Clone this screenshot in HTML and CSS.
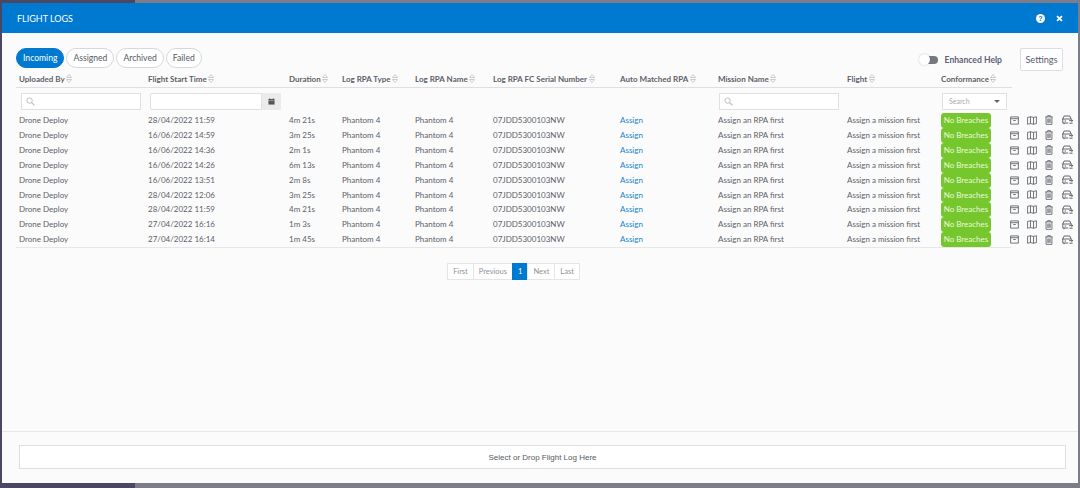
FILE: index.html
```html
<!DOCTYPE html>
<html lang="en">
<head>
<meta charset="utf-8">
<title>Flight Logs</title>
<link rel="stylesheet" href="styles.css">
</head>
<body>
<svg class="defs" width="0" height="0" aria-hidden="true">
  <symbol id="i-sort" viewBox="0 0 6 9"><path d="M3 .5 5.5 3.5H.5ZM3 8.5 .5 5.5h5Z" fill="none" stroke="#bcbfc3" stroke-width=".8"/></symbol>
  <symbol id="i-archive" viewBox="0 0 10 10"><path d="M.7 1h8.6v8H.7ZM.7 3h8.6M3.6 5h2.8" fill="none" stroke="#50565e" stroke-width=".9"/></symbol>
  <symbol id="i-map" viewBox="0 0 11 10"><path d="M.6 1.6 3.8.8l3.4.8 3.2-.8v7.6l-3.2.8-3.4-.8-3.2.8ZM3.8.8v7.6M7.2 1.6v7.6" fill="none" stroke="#50565e" stroke-width=".9"/></symbol>
  <symbol id="i-trash" viewBox="0 0 9 11"><path d="M.4 2h8.2M3 2V.6h3V2M1.2 2v8.4h6.6V2M3.2 3.8v5M4.5 3.8v5M5.8 3.8v5" fill="none" stroke="#50565e" stroke-width=".9"/></symbol>
  <symbol id="i-drone" viewBox="0 0 12 10"><path d="M.8 8V3.8L2.2 1h5.6L9 3.8M.4 4h9.2M.8 8h5.4M2 8v1.2M2.6 6h1.4" fill="none" stroke="#50565e" stroke-width=".9"/><path d="M7.2 5.6h3.4M9.4 4.4l1.4 1.2-1.4 1.2M10.6 8.2H7.4" fill="none" stroke="#50565e" stroke-width=".9"/></symbol>
  <symbol id="i-search" viewBox="0 0 10 10"><circle cx="4" cy="4" r="3" fill="none" stroke="#b5b9bd" stroke-width="1"/><path d="M6.2 6.2 9.4 9.4" stroke="#b5b9bd" stroke-width="1.2"/></symbol>
</svg>
<div class="modal">
  <header class="modal-head">
    <h1 class="modal-title">FLIGHT LOGS</h1>
    <div class="modal-actions">
      <svg class="head-icon" viewBox="0 0 10 10" width="9" height="9"><circle cx="5" cy="5" r="5" fill="#fff"/><text x="5" y="8" text-anchor="middle" class="help-mark">?</text></svg>
      <svg class="head-icon" viewBox="0 0 8 8" width="7" height="7"><path d="M1.2 1.2 6.8 6.8M6.8 1.2 1.2 6.8" stroke="#fff" stroke-width="2"/></svg>
    </div>
  </header>
  <main class="modal-body">
    <div class="toolbar">
      <nav class="tabs">
        <a class="tab tab-active">Incoming</a>
        <a class="tab">Assigned</a>
        <a class="tab">Archived</a>
        <a class="tab">Failed</a>
      </nav>
      <div class="toolbar-right">
        <span class="switch"><span class="switch-knob"></span></span>
        <span class="help-label">Enhanced Help</span>
        <button class="settings">Settings</button>
      </div>
    </div>
    <table class="logs">
      <colgroup>
        <col class="c1"><col class="c2"><col class="c3"><col class="c4"><col class="c5"><col class="c6"><col class="c7"><col class="c8"><col class="c9"><col class="c10"><col class="c11">
      </colgroup>
      <thead>
        <tr class="head-row">
          <th>Uploaded By<svg class="sort"><use href="#i-sort"/></svg></th>
          <th>Flight Start Time<svg class="sort"><use href="#i-sort"/></svg></th>
          <th>Duration<svg class="sort"><use href="#i-sort"/></svg></th>
          <th>Log RPA Type<svg class="sort"><use href="#i-sort"/></svg></th>
          <th>Log RPA Name<svg class="sort"><use href="#i-sort"/></svg></th>
          <th>Log RPA FC Serial Number<svg class="sort"><use href="#i-sort"/></svg></th>
          <th>Auto Matched RPA<svg class="sort"><use href="#i-sort"/></svg></th>
          <th>Mission Name<svg class="sort"><use href="#i-sort"/></svg></th>
          <th>Flight<svg class="sort"><use href="#i-sort"/></svg></th>
          <th>Conformance<svg class="sort"><use href="#i-sort"/></svg></th>
          <th class="th-tail"></th>
        </tr>
        <tr class="filter-row">
          <td><div class="field field-name"><svg class="field-icon"><use href="#i-search"/></svg></div></td>
          <td><div class="date-field"><div class="date-input"></div><div class="date-btn"><svg viewBox="0 0 8 8" width="7" height="7"><path d="M.5 1.2h7v6.3h-7Z" fill="#555"/><path d="M2 .3v1.4M6 .3v1.4" stroke="#555"/><path d="M.5 3h7" stroke="#e9e9e9" stroke-width=".5"/></svg></div></div></td>
          <td></td><td></td><td></td><td></td><td></td>
          <td><div class="field field-mission"><svg class="field-icon"><use href="#i-search"/></svg></div></td>
          <td></td>
          <td><div class="select"><span>Search</span><i class="caret"></i></div></td>
          <td></td>
        </tr>
      </thead>
      <tbody>
        <tr>
          <td>Drone Deploy</td><td>28/04/2022 11:59</td><td>4m 21s</td><td>Phantom 4</td><td>Phantom 4</td><td>07JDD5300103NW</td><td><a class="link">Assign</a></td><td>Assign an RPA first</td><td>Assign a mission first</td><td class="cell-badge"><span class="badge">No Breaches</span></td>
          <td><div class="acts"><svg class="a1"><use href="#i-archive"/></svg><svg class="a2"><use href="#i-map"/></svg><svg class="a3"><use href="#i-trash"/></svg><svg class="a4"><use href="#i-drone"/></svg></div></td>
        </tr>
        <tr>
          <td>Drone Deploy</td><td>16/06/2022 14:59</td><td>3m 25s</td><td>Phantom 4</td><td>Phantom 4</td><td>07JDD5300103NW</td><td><a class="link">Assign</a></td><td>Assign an RPA first</td><td>Assign a mission first</td><td class="cell-badge"><span class="badge">No Breaches</span></td>
          <td><div class="acts"><svg class="a1"><use href="#i-archive"/></svg><svg class="a2"><use href="#i-map"/></svg><svg class="a3"><use href="#i-trash"/></svg><svg class="a4"><use href="#i-drone"/></svg></div></td>
        </tr>
        <tr>
          <td>Drone Deploy</td><td>16/06/2022 14:36</td><td>2m 1s</td><td>Phantom 4</td><td>Phantom 4</td><td>07JDD5300103NW</td><td><a class="link">Assign</a></td><td>Assign an RPA first</td><td>Assign a mission first</td><td class="cell-badge"><span class="badge">No Breaches</span></td>
          <td><div class="acts"><svg class="a1"><use href="#i-archive"/></svg><svg class="a2"><use href="#i-map"/></svg><svg class="a3"><use href="#i-trash"/></svg><svg class="a4"><use href="#i-drone"/></svg></div></td>
        </tr>
        <tr>
          <td>Drone Deploy</td><td>16/06/2022 14:26</td><td>6m 13s</td><td>Phantom 4</td><td>Phantom 4</td><td>07JDD5300103NW</td><td><a class="link">Assign</a></td><td>Assign an RPA first</td><td>Assign a mission first</td><td class="cell-badge"><span class="badge">No Breaches</span></td>
          <td><div class="acts"><svg class="a1"><use href="#i-archive"/></svg><svg class="a2"><use href="#i-map"/></svg><svg class="a3"><use href="#i-trash"/></svg><svg class="a4"><use href="#i-drone"/></svg></div></td>
        </tr>
        <tr>
          <td>Drone Deploy</td><td>16/06/2022 13:51</td><td>2m 8s</td><td>Phantom 4</td><td>Phantom 4</td><td>07JDD5300103NW</td><td><a class="link">Assign</a></td><td>Assign an RPA first</td><td>Assign a mission first</td><td class="cell-badge"><span class="badge">No Breaches</span></td>
          <td><div class="acts"><svg class="a1"><use href="#i-archive"/></svg><svg class="a2"><use href="#i-map"/></svg><svg class="a3"><use href="#i-trash"/></svg><svg class="a4"><use href="#i-drone"/></svg></div></td>
        </tr>
        <tr>
          <td>Drone Deploy</td><td>28/04/2022 12:06</td><td>3m 25s</td><td>Phantom 4</td><td>Phantom 4</td><td>07JDD5300103NW</td><td><a class="link">Assign</a></td><td>Assign an RPA first</td><td>Assign a mission first</td><td class="cell-badge"><span class="badge">No Breaches</span></td>
          <td><div class="acts"><svg class="a1"><use href="#i-archive"/></svg><svg class="a2"><use href="#i-map"/></svg><svg class="a3"><use href="#i-trash"/></svg><svg class="a4"><use href="#i-drone"/></svg></div></td>
        </tr>
        <tr>
          <td>Drone Deploy</td><td>28/04/2022 11:59</td><td>4m 21s</td><td>Phantom 4</td><td>Phantom 4</td><td>07JDD5300103NW</td><td><a class="link">Assign</a></td><td>Assign an RPA first</td><td>Assign a mission first</td><td class="cell-badge"><span class="badge">No Breaches</span></td>
          <td><div class="acts"><svg class="a1"><use href="#i-archive"/></svg><svg class="a2"><use href="#i-map"/></svg><svg class="a3"><use href="#i-trash"/></svg><svg class="a4"><use href="#i-drone"/></svg></div></td>
        </tr>
        <tr>
          <td>Drone Deploy</td><td>27/04/2022 16:16</td><td>1m 3s</td><td>Phantom 4</td><td>Phantom 4</td><td>07JDD5300103NW</td><td><a class="link">Assign</a></td><td>Assign an RPA first</td><td>Assign a mission first</td><td class="cell-badge"><span class="badge">No Breaches</span></td>
          <td><div class="acts"><svg class="a1"><use href="#i-archive"/></svg><svg class="a2"><use href="#i-map"/></svg><svg class="a3"><use href="#i-trash"/></svg><svg class="a4"><use href="#i-drone"/></svg></div></td>
        </tr>
        <tr>
          <td>Drone Deploy</td><td>27/04/2022 16:14</td><td>1m 45s</td><td>Phantom 4</td><td>Phantom 4</td><td>07JDD5300103NW</td><td><a class="link">Assign</a></td><td>Assign an RPA first</td><td>Assign a mission first</td><td class="cell-badge"><span class="badge">No Breaches</span></td>
          <td><div class="acts"><svg class="a1"><use href="#i-archive"/></svg><svg class="a2"><use href="#i-map"/></svg><svg class="a3"><use href="#i-trash"/></svg><svg class="a4"><use href="#i-drone"/></svg></div></td>
        </tr>
      </tbody>
    </table>
    <nav class="pager">
      <a class="page">First</a><a class="page">Previous</a><a class="page page-current">1</a><a class="page">Next</a><a class="page">Last</a>
    </nav>
  </main>
  <footer class="modal-foot">
    <div class="drop">Select or Drop Flight Log Here</div>
  </footer>
</div>
</body>
</html>
```

FILE: styles.css
```css
* { box-sizing: border-box; }

html, body {
  height: 100%;
}

body {
  margin: 0;
  padding: 3px 2px 5px 2px;
  background: linear-gradient(to right, #4b4762 135px, #7d7c89 135px);
  font-family: Lato, "Open Sans", sans-serif;
  font-size: 8px;
  color: #5c6168;
  overflow: hidden;
}

.defs { display: block; position: absolute; }

.modal {
  height: 100%;
  display: flex;
  flex-direction: column;
  background: #fbfbfb;
}

.modal-head {
  flex: none;
  height: 30px;
  background: #0079d1;
  color: #fff;
  display: flex;
  align-items: center;
  justify-content: space-between;
  padding: 0 15px;
}

.modal-title {
  margin: 0;
  font-size: 9px;
  font-weight: 400;
}

.modal-actions {
  display: flex;
  align-items: center;
  gap: 11px;
}

.head-icon { display: block; }

.help-mark {
  font-family: "Liberation Sans", sans-serif;
  font-size: 8px;
  font-weight: 700;
  fill: #0079d1;
}

.modal-body {
  flex: 1;
  min-height: 0;
  padding: 15px 15px 0 14px;
}

.toolbar {
  height: 24px;
  display: flex;
  align-items: flex-start;
  justify-content: space-between;
}

.tabs {
  display: flex;
  gap: 2px;
}

.tab {
  height: 20px;
  padding: 0 6px;
  display: flex;
  align-items: center;
  border: 1px solid #d6d8da;
  border-radius: 10px;
  background: #fff;
  font-size: 8.6px;
  color: #555a61;
}

.tab-active {
  background: #0079d1;
  border-color: #0079d1;
  color: #fff;
}

.toolbar-right {
  display: flex;
  align-items: center;
  height: 23px;
}

.switch {
  position: relative;
  width: 18px;
  height: 8px;
  border-radius: 4px;
  background: #75787e;
  margin-right: 7px;
}

.switch-knob {
  position: absolute;
  left: -1px;
  top: -2px;
  width: 11px;
  height: 11px;
  border-radius: 50%;
  background: #fff;
  box-shadow: 0 0 2px rgba(0, 0, 0, .25);
}

.help-label {
  font-size: 8.6px;
  font-weight: 700;
  color: #5f6176;
  margin-right: 18px;
}

.settings {
  width: 43px;
  height: 23px;
  padding: 0;
  border: 1px solid #dcdde0;
  border-radius: 2px;
  background: #fff;
  font-family: Lato, sans-serif;
  font-size: 9.2px;
  color: #5b5d72;
}

.logs {
  table-layout: fixed;
  border-collapse: collapse;
  width: 996px;
}

.c1 { width: 129px; }
.c2 { width: 141px; }
.c3 { width: 53px; }
.c4 { width: 73px; }
.c5 { width: 78px; }
.c6 { width: 127px; }
.c7 { width: 98px; }
.c8 { width: 129px; }
.c9 { width: 94px; }
.c10 { width: 69px; }
.c11 { width: 5px; }

.logs th {
  height: 15px;
  padding: 0 0 1px 3px;
  text-align: left;
  font-size: 8px;
  font-weight: 700;
  color: #5c6168;
  white-space: nowrap;
  border-bottom: 1px solid #dddfe1;
}

.sort {
  width: 6px;
  height: 9px;
  margin-left: 1.5px;
  vertical-align: -1.5px;
}

.filter-row td {
  height: 26px;
  padding: 5px 0 0 0;
  vertical-align: top;
}

.field, .date-input, .select {
  background: #fff;
  border: 1px solid #dfe0e2;
  height: 17px;
}

.field {
  display: flex;
  align-items: center;
  padding-left: 4px;
}

.field-name { width: 120px; margin-left: 5px; }
.field-mission { width: 120px; margin-left: 4px; }

.field-icon { width: 9px; height: 9px; }

.date-field {
  display: flex;
  width: 131px;
  margin-left: 5px;
}

.date-input { flex: 1; border-radius: 2px 0 0 2px; }

.date-btn {
  width: 19px;
  height: 17px;
  background: #ebebeb;
  display: flex;
  align-items: center;
  justify-content: center;
}

.select {
  width: 65px;
  margin-left: 4px;
  display: flex;
  align-items: center;
  justify-content: space-between;
  padding: 0 6px;
  font-size: 7px;
  color: #a8abb0;
}

.caret {
  width: 0;
  height: 0;
  border-left: 3px solid transparent;
  border-right: 3px solid transparent;
  border-top: 3px solid #666;
}

.logs tbody td {
  height: 14.9px;
  padding: 0 0 0 3px;
  white-space: nowrap;
  color: #5c6168;
  line-height: 14.9px;
}

.logs tbody tr:last-child td {
  border-bottom: 1px solid #e6e7e8;
}

.link { color: #1583cf; }

.cell-badge { vertical-align: top; }

.logs tbody td.cell-badge { padding-left: 3px; }

.badge {
  display: block;
  width: 50px;
  height: 14.9px;
  line-height: 14.9px;
  text-align: center;
  background: #76c72e;
  color: #eaf8da;
  border-radius: 3px;
  font-size: 8px;
}

.logs tbody td:last-child { overflow: visible; padding: 0; }

.acts {
  display: flex;
  align-items: center;
  height: 14.9px;
  margin-left: 3px;
  width: 70px;
}

.acts svg { flex: none; display: block; }
.a1 { width: 9px; height: 9px; margin-right: 8px; }
.a2 { width: 10px; height: 9px; margin-right: 8px; }
.a3 { width: 8px; height: 10px; margin-right: 9px; }
.a4 { width: 12px; height: 10px; }

.pager {
  display: flex;
  justify-content: center;
  margin-top: 15px;
  padding-right: 51px;
}

.page {
  height: 17px;
  padding: 0 5px;
  display: flex;
  align-items: center;
  background: #fff;
  border: 1px solid #e4e5e7;
  margin-left: -1px;
  font-size: 7.5px;
  color: #8e9298;
}

.page-current {
  background: #0079d1;
  border-color: #0079d1;
  color: #fff;
}

.modal-foot {
  flex: none;
  height: 52px;
  border-top: 1px solid #e9e9e9;
  padding: 13px 12px 0 17px;
}

.drop {
  height: 24px;
  display: flex;
  align-items: center;
  justify-content: center;
  background: #fff;
  border: 1px solid #dedfe0;
  font-family: "Liberation Sans", sans-serif;
  font-size: 8px;
  color: #555b62;
}
```
